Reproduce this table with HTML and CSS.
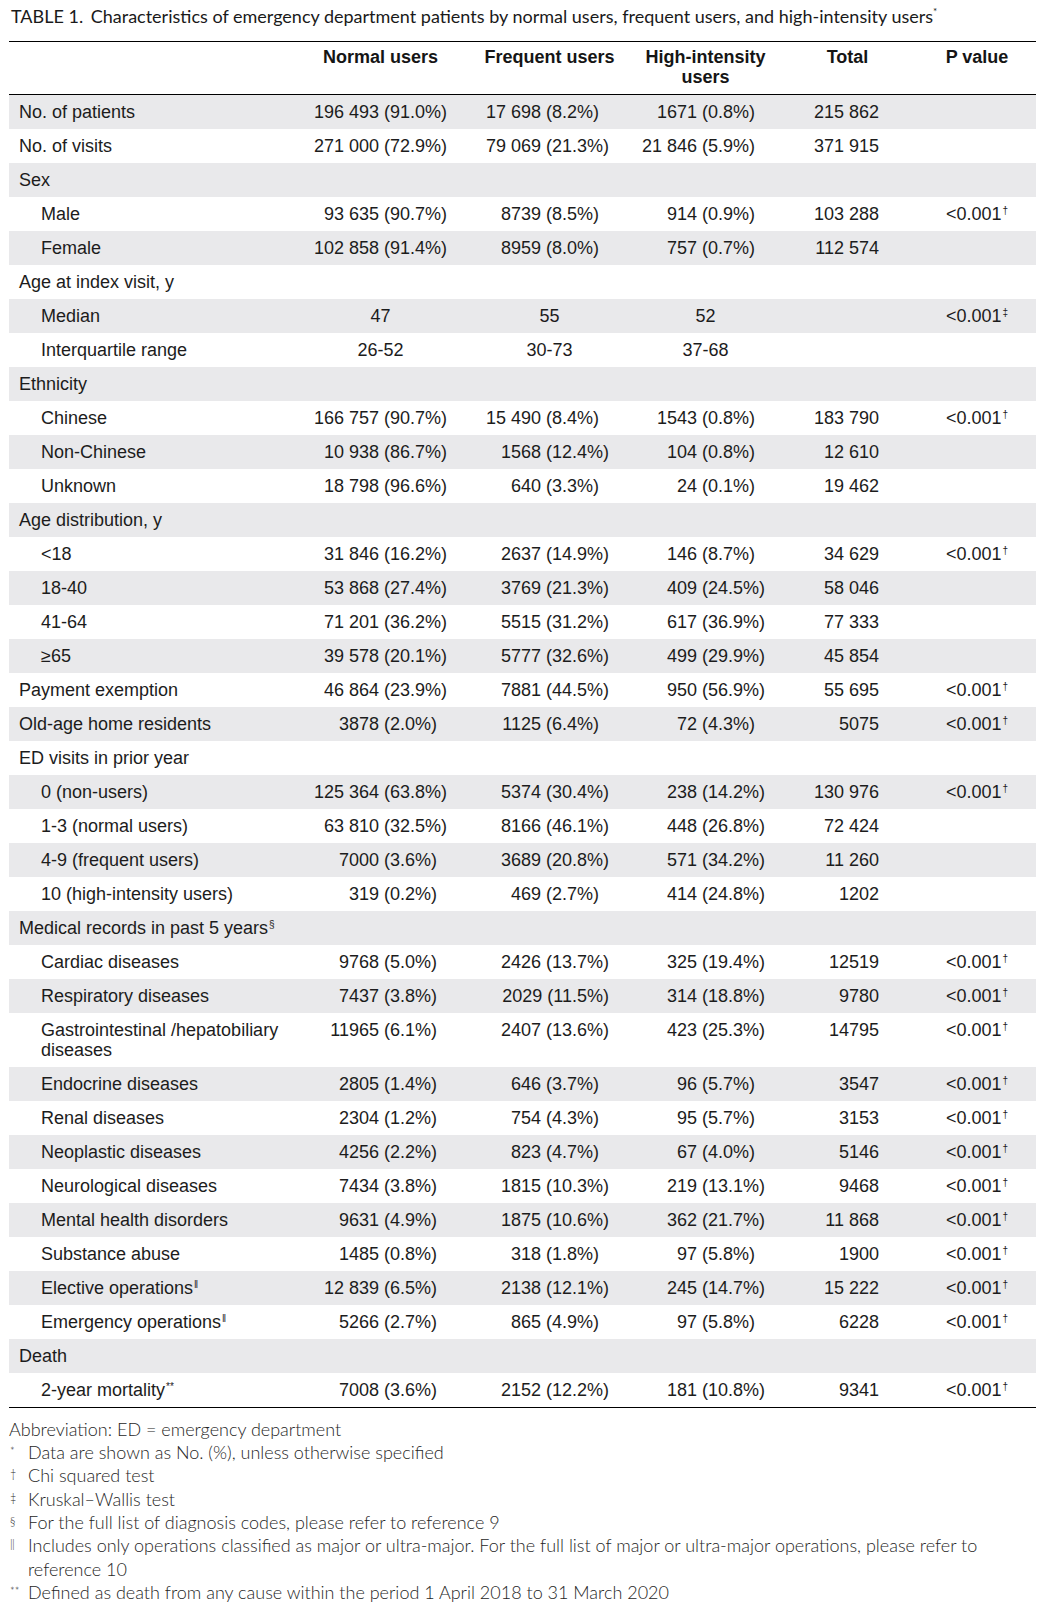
FILE: index.html
```html
<!DOCTYPE html>
<html lang="en">
<head>
<meta charset="utf-8">
<title>Table 1</title>
<link rel="stylesheet" href="styles.css">
</head>
<body>
<div class="page">
  <h1 class="title"><span class="tlabel">TABLE 1.</span> Characteristics of emergency department patients by normal users, frequent users, and high-intensity users<sup class="tmark">*</sup></h1>
  <table class="tbl">
    <colgroup>
      <col class="c-label"><col class="c-n"><col class="c-f"><col class="c-h"><col class="c-t"><col class="c-p">
    </colgroup>
    <thead>
      <tr><th></th><th>Normal users</th><th>Frequent users</th><th>High-intensity users</th><th>Total</th><th>P value</th></tr>
    </thead>
    <tbody>
      <tr><td class="lab">No. of patients</td><td>196&nbsp;493 (91.0%)</td><td>17&nbsp;698 (8.2%)<i class="pad"></i></td><td>1671 (0.8%)<i class="pad"></i></td><td>215&nbsp;862</td><td></td></tr>
      <tr><td class="lab">No. of visits</td><td>271&nbsp;000 (72.9%)</td><td>79&nbsp;069 (21.3%)</td><td>21&nbsp;846 (5.9%)<i class="pad"></i></td><td>371&nbsp;915</td><td></td></tr>
      <tr><td class="lab">Sex</td><td></td><td></td><td></td><td></td><td></td></tr>
      <tr><td class="lab sub">Male</td><td>93&nbsp;635 (90.7%)</td><td>8739 (8.5%)<i class="pad"></i></td><td>914 (0.9%)<i class="pad"></i></td><td>103&nbsp;288</td><td>&lt;0.001<sup class="s">†</sup></td></tr>
      <tr><td class="lab sub">Female</td><td>102&nbsp;858 (91.4%)</td><td>8959 (8.0%)<i class="pad"></i></td><td>757 (0.7%)<i class="pad"></i></td><td>112&nbsp;574</td><td></td></tr>
      <tr><td class="lab">Age at index visit, y</td><td></td><td></td><td></td><td></td><td></td></tr>
      <tr class="ctr"><td class="lab sub">Median</td><td>47</td><td>55</td><td>52</td><td></td><td>&lt;0.001<sup class="s">‡</sup></td></tr>
      <tr class="ctr"><td class="lab sub">Interquartile range</td><td>26-52</td><td>30-73</td><td>37-68</td><td></td><td></td></tr>
      <tr><td class="lab">Ethnicity</td><td></td><td></td><td></td><td></td><td></td></tr>
      <tr><td class="lab sub">Chinese</td><td>166&nbsp;757 (90.7%)</td><td>15&nbsp;490 (8.4%)<i class="pad"></i></td><td>1543 (0.8%)<i class="pad"></i></td><td>183&nbsp;790</td><td>&lt;0.001<sup class="s">†</sup></td></tr>
      <tr><td class="lab sub">Non-Chinese</td><td>10&nbsp;938 (86.7%)</td><td>1568 (12.4%)</td><td>104 (0.8%)<i class="pad"></i></td><td>12&nbsp;610</td><td></td></tr>
      <tr><td class="lab sub">Unknown</td><td>18&nbsp;798 (96.6%)</td><td>640 (3.3%)<i class="pad"></i></td><td>24 (0.1%)<i class="pad"></i></td><td>19&nbsp;462</td><td></td></tr>
      <tr><td class="lab">Age distribution, y</td><td></td><td></td><td></td><td></td><td></td></tr>
      <tr><td class="lab sub">&lt;18</td><td>31&nbsp;846 (16.2%)</td><td>2637 (14.9%)</td><td>146 (8.7%)<i class="pad"></i></td><td>34&nbsp;629</td><td>&lt;0.001<sup class="s">†</sup></td></tr>
      <tr><td class="lab sub">18-40</td><td>53&nbsp;868 (27.4%)</td><td>3769 (21.3%)</td><td>409 (24.5%)</td><td>58&nbsp;046</td><td></td></tr>
      <tr><td class="lab sub">41-64</td><td>71&nbsp;201 (36.2%)</td><td>5515 (31.2%)</td><td>617 (36.9%)</td><td>77&nbsp;333</td><td></td></tr>
      <tr><td class="lab sub">≥65</td><td>39&nbsp;578 (20.1%)</td><td>5777 (32.6%)</td><td>499 (29.9%)</td><td>45&nbsp;854</td><td></td></tr>
      <tr><td class="lab">Payment exemption</td><td>46&nbsp;864 (23.9%)</td><td>7881 (44.5%)</td><td>950 (56.9%)</td><td>55&nbsp;695</td><td>&lt;0.001<sup class="s">†</sup></td></tr>
      <tr><td class="lab">Old-age home residents</td><td>3878 (2.0%)<i class="pad"></i></td><td>1125 (6.4%)<i class="pad"></i></td><td>72 (4.3%)<i class="pad"></i></td><td>5075</td><td>&lt;0.001<sup class="s">†</sup></td></tr>
      <tr><td class="lab">ED visits in prior year</td><td></td><td></td><td></td><td></td><td></td></tr>
      <tr><td class="lab sub">0 (non-users)</td><td>125&nbsp;364 (63.8%)</td><td>5374 (30.4%)</td><td>238 (14.2%)</td><td>130&nbsp;976</td><td>&lt;0.001<sup class="s">†</sup></td></tr>
      <tr><td class="lab sub">1-3 (normal users)</td><td>63&nbsp;810 (32.5%)</td><td>8166 (46.1%)</td><td>448 (26.8%)</td><td>72&nbsp;424</td><td></td></tr>
      <tr><td class="lab sub">4-9 (frequent users)</td><td>7000 (3.6%)<i class="pad"></i></td><td>3689 (20.8%)</td><td>571 (34.2%)</td><td>11&nbsp;260</td><td></td></tr>
      <tr><td class="lab sub">10 (high-intensity users)</td><td>319 (0.2%)<i class="pad"></i></td><td>469 (2.7%)<i class="pad"></i></td><td>414 (24.8%)</td><td>1202</td><td></td></tr>
      <tr><td class="lab">Medical records in past 5 years<sup class="ls">§</sup></td><td></td><td></td><td></td><td></td><td></td></tr>
      <tr><td class="lab sub">Cardiac diseases</td><td>9768 (5.0%)<i class="pad"></i></td><td>2426 (13.7%)</td><td>325 (19.4%)</td><td>12519</td><td>&lt;0.001<sup class="s">†</sup></td></tr>
      <tr><td class="lab sub">Respiratory diseases</td><td>7437 (3.8%)<i class="pad"></i></td><td>2029 (11.5%)</td><td>314 (18.8%)</td><td>9780</td><td>&lt;0.001<sup class="s">†</sup></td></tr>
      <tr class="top"><td class="lab sub wrap">Gastrointestinal /hepatobiliary diseases</td><td>11965 (6.1%)<i class="pad"></i></td><td>2407 (13.6%)</td><td>423 (25.3%)</td><td>14795</td><td>&lt;0.001<sup class="s">†</sup></td></tr>
      <tr><td class="lab sub">Endocrine diseases</td><td>2805 (1.4%)<i class="pad"></i></td><td>646 (3.7%)<i class="pad"></i></td><td>96 (5.7%)<i class="pad"></i></td><td>3547</td><td>&lt;0.001<sup class="s">†</sup></td></tr>
      <tr><td class="lab sub">Renal diseases</td><td>2304 (1.2%)<i class="pad"></i></td><td>754 (4.3%)<i class="pad"></i></td><td>95 (5.7%)<i class="pad"></i></td><td>3153</td><td>&lt;0.001<sup class="s">†</sup></td></tr>
      <tr><td class="lab sub">Neoplastic diseases</td><td>4256 (2.2%)<i class="pad"></i></td><td>823 (4.7%)<i class="pad"></i></td><td>67 (4.0%)<i class="pad"></i></td><td>5146</td><td>&lt;0.001<sup class="s">†</sup></td></tr>
      <tr><td class="lab sub">Neurological diseases</td><td>7434 (3.8%)<i class="pad"></i></td><td>1815 (10.3%)</td><td>219 (13.1%)</td><td>9468</td><td>&lt;0.001<sup class="s">†</sup></td></tr>
      <tr><td class="lab sub">Mental health disorders</td><td>9631 (4.9%)<i class="pad"></i></td><td>1875 (10.6%)</td><td>362 (21.7%)</td><td>11&nbsp;868</td><td>&lt;0.001<sup class="s">†</sup></td></tr>
      <tr><td class="lab sub">Substance abuse</td><td>1485 (0.8%)<i class="pad"></i></td><td>318 (1.8%)<i class="pad"></i></td><td>97 (5.8%)<i class="pad"></i></td><td>1900</td><td>&lt;0.001<sup class="s">†</sup></td></tr>
      <tr><td class="lab sub">Elective operations<sup class="ls">‖</sup></td><td>12&nbsp;839 (6.5%)<i class="pad"></i></td><td>2138 (12.1%)</td><td>245 (14.7%)</td><td>15&nbsp;222</td><td>&lt;0.001<sup class="s">†</sup></td></tr>
      <tr><td class="lab sub">Emergency operations<sup class="ls">‖</sup></td><td>5266 (2.7%)<i class="pad"></i></td><td>865 (4.9%)<i class="pad"></i></td><td>97 (5.8%)<i class="pad"></i></td><td>6228</td><td>&lt;0.001<sup class="s">†</sup></td></tr>
      <tr><td class="lab">Death</td><td></td><td></td><td></td><td></td><td></td></tr>
      <tr><td class="lab sub">2-year mortality<sup class="ls">**</sup></td><td>7008 (3.6%)<i class="pad"></i></td><td>2152 (12.2%)</td><td>181 (10.8%)</td><td>9341</td><td>&lt;0.001<sup class="s">†</sup></td></tr>
    </tbody>
  </table>
  <div class="notes">
    <p class="abbr">Abbreviation: ED = emergency department</p>
    <div class="fn"><span class="m">*</span><span class="t">Data are shown as No. (%), unless otherwise specified</span></div>
    <div class="fn"><span class="m">†</span><span class="t">Chi squared test</span></div>
    <div class="fn"><span class="m">‡</span><span class="t">Kruskal–Wallis test</span></div>
    <div class="fn"><span class="m">§</span><span class="t">For the full list of diagnosis codes, please refer to reference 9</span></div>
    <div class="fn"><span class="m">‖</span><span class="t">Includes only operations classified as major or ultra-major. For the full list of major or ultra-major operations, please refer to<br>reference 10</span></div>
    <div class="fn"><span class="m">**</span><span class="t">Defined as death from any cause within the period 1 April 2018 to 31 March 2020</span></div>
  </div>
</div>
</body>
</html>
```

FILE: styles.css
```css
* { box-sizing: border-box; }
html, body { margin: 0; padding: 0; background: #fff; }
body {
  font-family: "Liberation Sans", Arial, sans-serif;
  color: #1c1c1c;
}
.page {
  width: 1040px;
  padding: 4px 0 0 9px;
}
.title {
  font-family: Lato, "Noto Sans", sans-serif;
  font-weight: 400;
  font-size: 18px;
  line-height: 24px;
  margin: 0 0 13px 2px;
  color: #1a1a1a;
  white-space: nowrap;
}
.tlabel { margin-right: 3px; }
.tmark {
  font-size: 10px;
  line-height: 0;
  vertical-align: 8px;
}
.tbl {
  width: 1027px;
  table-layout: fixed;
  border-collapse: separate;
  border-spacing: 0;
  font-size: 18px;
  line-height: 20px;
  border-top: 1px solid #000;
  border-bottom: 1px solid #000;
}
.c-label { width: 287px; }
.c-n { width: 169px; }
.c-f { width: 169px; }
.c-h { width: 143px; }
.c-t { width: 141px; }
.c-p { width: 118px; }
.tbl thead th {
  font-weight: bold;
  text-align: center;
  vertical-align: top;
  padding: 5px 0 7px;
  border-bottom: 1px solid #000;
  color: #151515;
}
.tbl td {
  padding: 7px 0;
  white-space: nowrap;
  vertical-align: top;
}
.tbl tbody tr:nth-child(odd) { background: #e9e9eb; }
.tbl td.lab { padding-left: 10px; }
.tbl td.lab.sub { padding-left: 32px; }
.tbl td.wrap { white-space: normal; padding-right: 8px; }
.tbl td:nth-child(2) { text-align: right; padding-right: 18px; }
.tbl td:nth-child(3) { text-align: right; padding-right: 25px; }
.tbl td:nth-child(4) { text-align: right; padding-right: 12px; }
.tbl td:nth-child(5) { text-align: right; padding-right: 39px; }
.tbl td:nth-child(6) { text-align: center; }
.tbl tr.ctr td:nth-child(2),
.tbl tr.ctr td:nth-child(3),
.tbl tr.ctr td:nth-child(4) { text-align: center; padding-right: 0; }
.pad { display: inline-block; width: 10px; }
.s {
  font-size: 10px;
  line-height: 0;
  vertical-align: 6px;
  margin-left: 1px;
}
.ls {
  font-size: 10px;
  line-height: 0;
  vertical-align: 6px;
  margin-left: 1px;
}
.notes {
  margin-top: 9.5px;
  font-family: Lato, "Noto Sans", sans-serif;
  font-weight: 300;
  font-size: 18px;
  line-height: 23.36px;
  color: #262626;
}
.abbr { margin: 0; white-space: nowrap; }
.fn { display: flex; white-space: nowrap; }
.fn .m {
  flex: 0 0 19px;
  font-size: 11px;
  line-height: 14px;
  padding-top: 3px;
  padding-left: 1px;
}
.fn .t { flex: 1 1 auto; }
```
